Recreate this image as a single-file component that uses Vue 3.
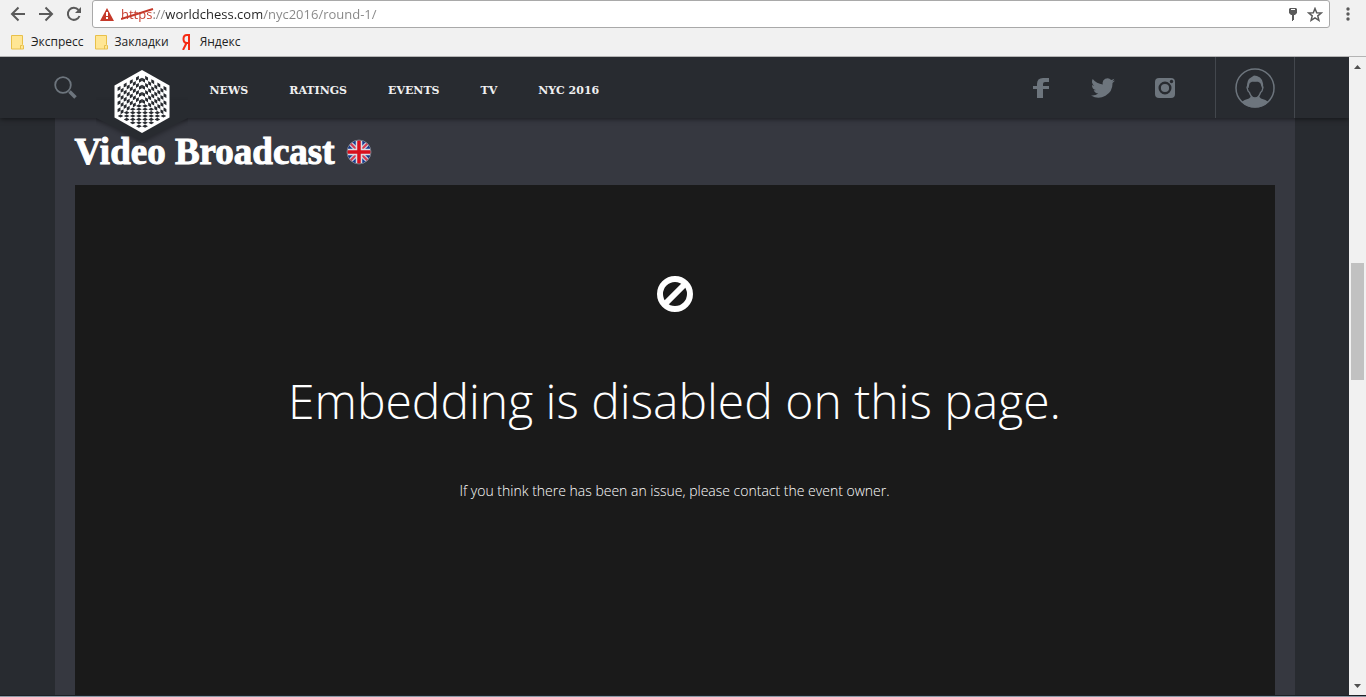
<script setup>
import { ref } from 'vue'

const address = ref('https://worldchess.com/nyc2016/round-1/')
const bookmarks = [
  { label: 'Экспресс', kind: 'folder' },
  { label: 'Закладки', kind: 'folder' },
  { label: 'Яндекс', kind: 'yandex' }
]
const links = ['NEWS', 'RATINGS', 'EVENTS', 'TV', 'NYC 2016']

// Checkered cube: every face is an origin and two edge vectors cut into N x N cells.
const N = 8
const faces = [
  { o: [28, 4], u: [-24.5, 13.5], v: [0, 28.5] },
  { o: [28, 4], u: [24.5, 13.5], v: [0, 28.5] },
  { o: [28, 32.5], u: [-24.5, 13.5], v: [24.5, 13.5] }
]
const inset = 0.03
const cells = faces
  .map(({ o, u, v }) => {
    let d = ''
    const at = (a, b) =>
      [o[0] + (u[0] * a + v[0] * b) / N, o[1] + (u[1] * a + v[1] * b) / N]
        .map((n) => n.toFixed(2))
        .join(' ')
    for (let i = 0; i < N; i++) {
      for (let j = 0; j < N; j++) {
        if ((i + j) % 2 === 0) continue
        const [a, b, c, e] = [i + inset, j + inset, i + 1 - inset, j + 1 - inset]
        d += `M${at(a, b)}L${at(c, b)}L${at(c, e)}L${at(a, e)}Z`
      }
    }
    return d
  })
  .join('')
</script>

<template>
  <div class="browser">
    <div class="toolbar">
      <button class="tool" aria-label="Back">
        <svg width="16" height="16" viewBox="0 0 16 16"><path d="M15 8H2M8.500 1.500L2 8l6.500 6.500" /></svg>
      </button>
      <button class="tool" aria-label="Forward">
        <svg width="16" height="16" viewBox="0 0 16 16"><path d="M1 8h13M7.500 1.500L14 8l-6.500 6.500" /></svg>
      </button>
      <button class="tool" aria-label="Reload">
        <svg width="16" height="16" viewBox="0 0 16 16">
          <path d="M13.500 10A6 6 0 1 1 12.500 4" />
          <path class="solid" d="M15 1v6H9z" />
        </svg>
      </button>
      <div class="omnibox">
        <svg class="warn" width="14" height="13" viewBox="0 0 14 13">
          <path fill="#c5392a" d="M7 0l7 13H0z" />
          <path fill="#fff" d="M6 4h2v4H6zM6 9h2v2H6z" />
        </svg>
        <div class="field">
          <input v-model="address" class="address" aria-label="Address" spellcheck="false" />
          <svg class="strike" width="34" height="12" viewBox="0 0 34 12"><path d="M0 11L32 1" /></svg>
        </div>
        <button class="mini" aria-label="Saved password">
          <svg width="8" height="13" viewBox="0 0 8 13">
            <path fill="#5a5a5a" fill-rule="evenodd" d="M1 0h6l1 1v4L6 7H5v5H4v1H3V7H2L0 5V1zM2 1v1h4V1z" />
          </svg>
        </button>
        <button class="mini" aria-label="Bookmark this page">
          <svg width="16" height="15" viewBox="0 0 16 15">
            <path class="star" d="M8 1.500l1.700 4.200 4.600.3-3.500 2.900 1.100 4.400L8 10.900l-3.900 2.400 1.100-4.400L1.700 6l4.600-.3z" />
          </svg>
        </button>
      </div>
      <button class="menu" aria-label="Menu">
        <svg width="4" height="14" viewBox="0 0 4 14" fill="#5a5a5a">
          <circle cx="2" cy="2" r="1.700" /><circle cx="2" cy="7" r="1.700" /><circle cx="2" cy="12" r="1.700" />
        </svg>
      </button>
    </div>

    <div class="bookmarks">
      <a v-for="b in bookmarks" :key="b.label" href="#" class="bookmark">
        <svg v-if="b.kind === 'folder'" width="13" height="15" viewBox="0 0 13 15">
          <path fill="#ffe694" stroke="#e8c04a" d="M.5.500h11v9l1 1v3.500H.5z" />
          <path fill="none" stroke="#e8c04a" d="M9.500 14v-3.500h2" />
        </svg>
        <svg v-else class="ya" width="13" height="16" viewBox="0 0 13 16">
          <path d="M9 16V1H7C4.500 1 3.500 2.800 3.500 5S4.500 9 7 9h2M6.500 9L3 16" />
        </svg>
        <span>{{ b.label }}</span>
      </a>
    </div>

    <div class="viewport">
      <div class="page">
        <header class="header">
          <div class="bar">
            <button class="search" aria-label="Search">
              <svg width="24" height="24" viewBox="0 0 24 24">
                <circle cx="9" cy="9" r="7.800" fill="none" stroke="#6d757d" stroke-width="1.800" />
                <path d="M15.500 15.500L21.500 21.500" stroke="#6d757d" stroke-width="3.600" />
              </svg>
            </button>
            <a href="#" class="logo" aria-label="World Chess">
              <svg width="92" height="86" viewBox="-18 -13 92 86">
                <path class="badge" d="M-18 48L28 71 74 48V30H-18z" />
                <path fill="#fff" d="M28 0l27.500 15.500v32L28 63 .5 47.500v-32z" />
                <path fill="#282b30" :d="cells" />
              </svg>
            </a>
            <nav class="nav">
              <a v-for="l in links" :key="l" href="#">{{ l }}</a>
            </nav>
            <div class="social">
              <a href="#" aria-label="Facebook">
                <svg width="24" height="24" viewBox="0 0 24 24">
                  <path d="M8 22V13H4V10H8V8Q8 2 14 2H20V6H16Q14 6 14 8V10H20V13H14V22z" />
                </svg>
              </a>
              <a href="#" aria-label="Twitter">
                <svg width="24" height="24" viewBox="0 0 24 24">
                  <path d="M24 4.600a10 10 0 0 1-2.800.8 5 5 0 0 0 2.100-2.700 10 10 0 0 1-3.100 1.200 4.900 4.900 0 0 0-8.400 4.500A14 14 0 0 1 1.700 3.100a4.900 4.900 0 0 0 1.500 6.600 5 5 0 0 1-2.200-.6 4.900 4.900 0 0 0 3.900 4.900 5 5 0 0 1-2.200.1 4.900 4.900 0 0 0 4.600 3.400A10 10 0 0 1 0 19.500 14 14 0 0 0 21.500 7.100 10 10 0 0 0 24 4.600z" />
                </svg>
              </a>
              <a href="#" aria-label="Instagram">
                <svg width="24" height="24" viewBox="0 0 24 24">
                  <rect x="2" y="2" width="20" height="20" rx="4" />
                  <circle cx="12" cy="12" r="5.300" fill="#6d757d" stroke="#282b30" stroke-width="2.400" />
                  <circle cx="18.500" cy="5.500" r="1.700" fill="#282b30" />
                </svg>
              </a>
            </div>
            <button class="account" aria-label="Account">
              <svg width="40" height="40" viewBox="0 0 40 40">
                <circle cx="20" cy="20" r="19" fill="none" stroke="#6d757d" stroke-width="1.500" />
                <path fill="#6d757d" d="M6.500 34Q9 31.500 14 30.500 16 30 16 27H24Q24 30 26 30.500 31 31.500 33.500 34 28 39.500 20 39.500T6.500 34z" />
                <path fill="#282b30" stroke="#6d757d" stroke-width="1.300" d="M13.500 15L12 19.500 13 23 14.500 24.500Q16 30 20 30T25.500 24.500L27 23 28 19.500 26.500 15Q20 10 13.500 15z" />
                <path fill="#6d757d" d="M12.500 20Q11 12 16 9.500L19 7.500 22 8Q29 10 28 20H27L25.500 15.500Q25 13.500 23.500 13 20 14.500 16.500 13 15 13.500 14.500 15.500L13.500 20z" />
              </svg>
            </button>
          </div>
        </header>

        <main class="content">
          <h1>
            Video Broadcast
            <svg width="26" height="26" viewBox="0 0 26 26">
              <defs><clipPath id="round-flag"><circle cx="13" cy="13" r="12" /></clipPath></defs>
              <g clip-path="url(#round-flag)">
                <path fill="#173b8f" d="M0 0h26v26H0z" />
                <path stroke="#c9cbd8" stroke-width="4.500" d="M2 2l22 22M24 2L2 24" />
                <path stroke="#d8384e" stroke-width="2" d="M2 2l22 22M24 2L2 24" />
                <path stroke="#dcdce4" stroke-width="6.500" d="M13 0v26M0 13h26" />
                <path stroke="#d80f1c" stroke-width="3.500" d="M13 0v26M0 13h26" />
              </g>
              <circle cx="13" cy="13" r="12" fill="none" stroke="#777b85" />
            </svg>
          </h1>
          <section class="player">
            <svg width="38" height="38" viewBox="0 0 38 38">
              <circle cx="19" cy="19" r="15" /><path d="M8.500 29.500l21-21" />
            </svg>
            <h2>Embedding is disabled on this page.</h2>
            <p>If you think there has been an issue, please contact the event owner.</p>
          </section>
        </main>
      </div>
      <div class="scrollbar">
        <svg width="7" height="4" viewBox="0 0 7 4"><path d="M0 4L3.500 0 7 4z" /></svg>
        <div class="track"><div class="thumb"></div></div>
        <svg width="7" height="4" viewBox="0 0 7 4"><path d="M0 0h7L3.500 4z" /></svg>
      </div>
    </div>
    <div class="edge"></div>
  </div>
</template>

<style>
body {
  margin: 0;
}
</style>

<style scoped>
.browser {
  display: flex;
  flex-direction: column;
  height: 100vh;
  overflow: hidden;
  background: #f1f1f1;
  font-family: "Open Sans", "Noto Sans", sans-serif;
}
button {
  padding: 0;
  border: 0;
  background: none;
  display: flex;
  align-items: center;
  justify-content: center;
}
a {
  color: inherit;
  text-decoration: none;
}
svg {
  display: block;
  flex: none;
}
.toolbar {
  display: flex;
  height: 28px;
  padding-left: 10px;
  flex: none;
}
.tool {
  width: 16px;
  margin-right: 12px;
}
.tool path {
  fill: none;
  stroke: #5a5a5a;
  stroke-width: 2;
}
.tool .solid {
  fill: #5a5a5a;
  stroke: none;
}
.omnibox {
  flex: 1;
  display: flex;
  align-items: center;
  gap: 10px;
  margin-left: -2px;
  padding: 0 6px 0 7px;
  box-sizing: border-box;
  border: 1px solid #a9a9a9;
  border-radius: 3px;
  background: #fff;
}
.field {
  position: relative;
  flex: 1;
  margin-left: -3px;
}
.address {
  display: block;
  width: 100%;
  height: 24px;
  padding: 0;
  border: 0;
  outline: 0;
  font: 13px/24px "Open Sans", "Noto Sans", sans-serif;
  color: transparent;
  background: linear-gradient(to right, #c5392a 31px, #858585 31px 44px, #222 44px 141px, #858585 141px);
  -webkit-background-clip: text;
  background-clip: text;
}
.strike {
  position: absolute;
  left: 0;
  top: 6px;
}
.strike path {
  stroke: #c5392a;
  stroke-width: 2;
}
.star {
  fill: none;
  stroke: #5a5a5a;
  stroke-width: 1.5;
}
.menu {
  width: 36px;
}
.bookmarks {
  display: flex;
  gap: 11px;
  height: 28px;
  padding-left: 11px;
  border-bottom: 1px solid #b4b4b4;
  flex: none;
  color: #222;
  font-size: 12px;
  line-height: 28px;
}
.bookmark {
  display: flex;
  align-items: center;
  gap: 7px;
}
.ya path {
  fill: none;
  stroke: #f52b14;
  stroke-width: 2;
}
.viewport {
  flex: 1;
  display: flex;
  min-height: 0;
}
.page {
  flex: 1;
  display: flex;
  flex-direction: column;
  background: #282b30;
  overflow: hidden;
}
.header {
  position: relative;
  z-index: 1;
  flex: none;
  height: 61px;
  background: #282b30;
  box-shadow: 0 1px 5px rgba(0, 0, 0, 0.55);
}
.bar {
  display: flex;
  align-items: center;
  position: relative;
  height: 61px;
  max-width: 1240px;
  margin: 0 auto;
}
.search {
  width: 22px;
}
.logo {
  position: absolute;
  left: 41px;
  top: 0;
}
.badge {
  fill: #282b30;
  filter: drop-shadow(0 2px 2px rgba(0, 0, 0, 0.3));
}
.nav {
  display: flex;
  gap: 41px;
  flex: 1;
  margin-left: 133px;
  padding-top: 6px;
  color: #f0f0f0;
  font: bold 11px/20px "DejaVu Serif", serif;
}
.social {
  display: flex;
  gap: 38px;
  margin-right: 38px;
  fill: #6d757d;
}
.account {
  box-sizing: border-box;
  width: 80px;
  height: 61px;
  border: solid #43474d;
  border-width: 0 1px;
}
.content {
  flex: 1;
  display: flex;
  flex-direction: column;
  box-sizing: border-box;
  width: 100%;
  max-width: 1240px;
  margin: 0 auto;
  padding: 0 20px;
  background: #363840;
}
h1 {
  display: flex;
  align-items: center;
  gap: 11px;
  margin: 0;
  height: 67px;
  color: #fff;
  font: bold 37px/67px "Liberation Serif", serif;
  -webkit-text-stroke: 1px #fff;
}
.player {
  flex: 1;
  display: flex;
  flex-direction: column;
  align-items: center;
  padding-top: 90px;
  background: #1a1a1a;
  color: #fff;
  text-align: center;
}
.player svg {
  fill: none;
  stroke: #fff;
  stroke-width: 6;
}
h2 {
  margin: 58px 0 0;
  font: 300 48px/60px "Open Sans", sans-serif;
}
p {
  margin: 50px 0 0;
  font: 300 14px/20px "Open Sans", sans-serif;
}
.scrollbar {
  width: 17px;
  flex: none;
  display: flex;
  flex-direction: column;
  align-items: center;
  box-sizing: border-box;
  padding: 8px 0 7px;
  background: #f1f1f1;
  fill: #505050;
}
.track {
  flex: 1;
  display: flex;
  flex-direction: column;
  width: 13px;
  padding-top: 194px;
}
.thumb {
  height: 117px;
  background: #c1c1c1;
}
.edge {
  height: 2px;
  flex: none;
  border-top: 1px solid #1c2025;
  box-sizing: border-box;
  background: #8b98a5;
}
</style>
